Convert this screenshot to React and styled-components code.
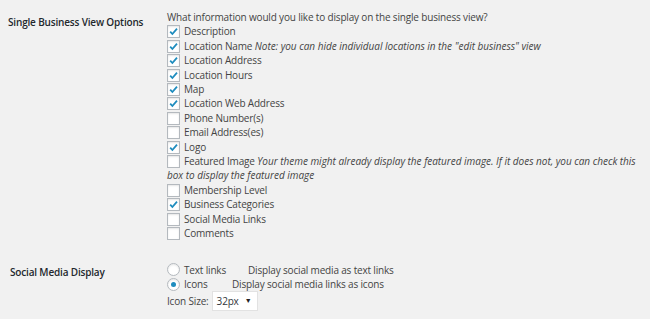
import React from 'react';
import styled, { createGlobalStyle } from 'styled-components';

const GlobalStyle = createGlobalStyle`
	html, body {
		margin: 0;
		padding: 0;
		background: #f1f1f1;
	}
	body {
		font-family: 'Open Sans', 'Noto Sans', sans-serif;
		font-size: 10px;
		letter-spacing: -0.17px;
		color: #444;
	}
`;

const Page = styled.div`
	padding: 10px 8px 0 8px;
	width: 650px;
	box-sizing: border-box;
`;

const Row = styled.div`
	display: grid;
	grid-template-columns: 159px 1fr;
	margin-bottom: ${(p) => p.gap || 0}px;
`;

const Label = styled.div`
	font-weight: 600;
	color: #23282d;
	padding-top: ${(p) => p.top || 5}px;
	padding-left: ${(p) => p.left || 0}px;
`;

const Field = styled.div`
	line-height: 14.4px;
	width: 470px;
`;

const Item = styled.div`
	display: block;
`;

const Box = styled.span`
	display: inline-block;
	width: 11px;
	height: 11px;
	border: 1px solid #b4b9be;
	background: #fff;
	box-shadow: inset 0 1px 2px rgba(0, 0, 0, 0.1);
	vertical-align: -3px;
	margin-right: 4px;
	position: relative;
	box-sizing: content-box;
`;

const Note = styled.em`
	font-style: italic;
	letter-spacing: -0.02px;
`;

const Check = ({ on }) => (
	<Box>
		{on && (
			<svg
				width='11'
				height='11'
				viewBox='0 0 11 11'
				style={{ position: 'absolute', left: 0, top: 0 }}
			>
				<path
					d='M2.2 5.6 L4.4 8 L9 2.6'
					fill='none'
					stroke='#1e8cbe'
					strokeWidth='1.8'
				/>
			</svg>
		)}
	</Box>
);

const Radio = styled.span`
	display: inline-block;
	flex: none;
	width: 11px;
	height: 11px;
	border: 1px solid #b4b9be;
	border-radius: 50%;
	background: #fff;
	box-shadow: inset 0 1px 2px rgba(0, 0, 0, 0.1);
	margin-right: 4px;
	position: relative;
	box-sizing: content-box;

	&::after {
		content: '';
		display: ${(p) => (p.on ? 'block' : 'none')};
		position: absolute;
		left: 3px;
		top: 3px;
		width: 5px;
		height: 5px;
		border-radius: 50%;
		background: #1e8cbe;
	}
`;

const RadioLine = styled.div`
	display: flex;
	align-items: center;
	line-height: 14.4px;
`;

const RadioText = styled.span`
	flex: none;
	width: ${(p) => p.w}px;
`;

const SizeLine = styled.div`
	display: flex;
	align-items: center;
	gap: 3px;
`;

const Select = styled.div`
	width: 46px;
	height: 20px;
	box-sizing: border-box;
	background: #fff;
	border: 1px solid #e2e2e2;
	display: flex;
	align-items: center;
	justify-content: space-between;
	padding: 0 5px 0 4px;
	color: #32373c;

	span {
		font-size: 7px;
		color: #222;
	}
`;

const options = [
	{ text: 'Description', on: true },
	{
		text: 'Location Name',
		on: true,
		note: 'Note: you can hide individual locations in the "edit business" view',
	},
	{ text: 'Location Address', on: true },
	{ text: 'Location Hours', on: true },
	{ text: 'Map', on: true },
	{ text: 'Location Web Address', on: true },
	{ text: 'Phone Number(s)' },
	{ text: 'Email Address(es)' },
	{ text: 'Logo', on: true },
	{
		text: 'Featured Image',
		note: 'Your theme might already display the featured image. If it does not, you can check this box to display the featured image',
	},
	{ text: 'Membership Level' },
	{ text: 'Business Categories', on: true },
	{ text: 'Social Media Links' },
	{ text: 'Comments' },
];

const App = () => {
	return (
		<Page>
			<GlobalStyle />
			<Row gap={22}>
				<Label top={5}>Single Business View Options</Label>
				<Field>
					<div>What information would you like to display on the single business view?</div>
					{options.map((o) => (
						<Item key={o.text}>
							<Check on={o.on} />
							{o.text}
							{o.note && <Note> {o.note}</Note>}
						</Item>
					))}
				</Field>
			</Row>
			<Row>
				<Label top={2} left={2}>Social Media Display</Label>
				<Field>
					<RadioLine>
						<Radio />
						<RadioText w={64}>Text links</RadioText>
						<span>Display social media as text links</span>
					</RadioLine>
					<RadioLine>
						<Radio on />
						<RadioText w={48}>Icons</RadioText>
						<span>Display social media links as icons</span>
					</RadioLine>
					<SizeLine>
						<span>Icon Size:</span>
						<Select>
							32px
							<span>▼</span>
						</Select>
					</SizeLine>
				</Field>
			</Row>
		</Page>
	);
};

export default App;
